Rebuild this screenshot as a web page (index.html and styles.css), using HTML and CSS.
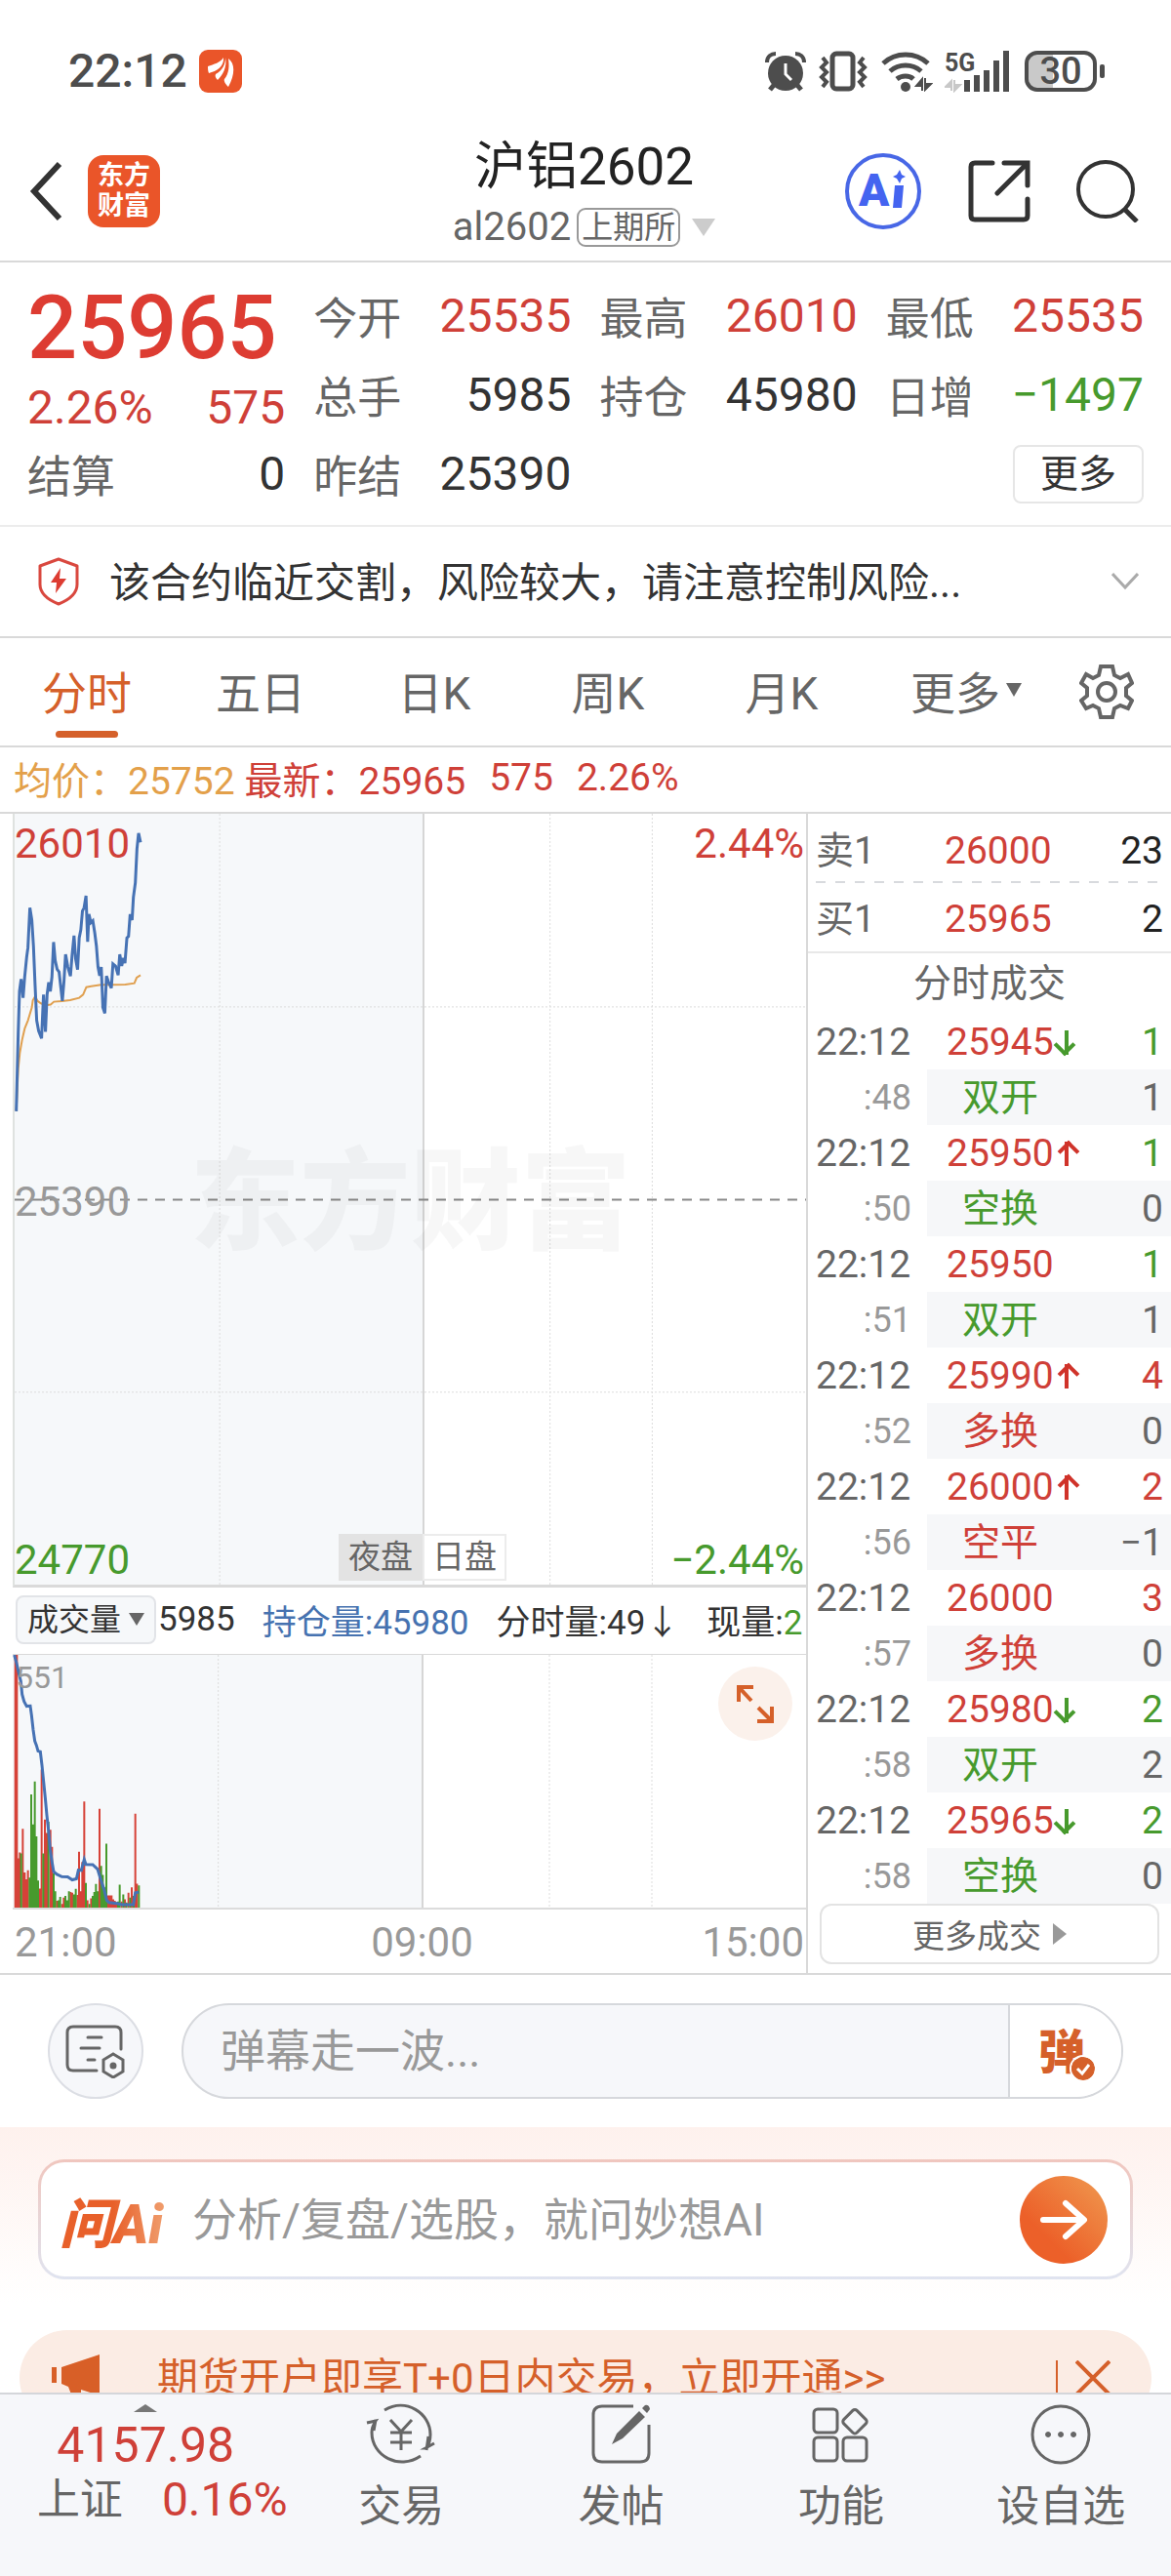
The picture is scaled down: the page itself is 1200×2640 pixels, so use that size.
FILE: index.html
```html
<!doctype html>
<html lang="zh-CN">
  <head>
    <meta charset="UTF-8" />
    <meta name="viewport" content="width=device-width, initial-scale=1.0" />
    <title>沪铝2602</title>
    <link rel="stylesheet" href="styles.css">
  </head>
  <body>
    <div class="status-bar">
      <span class="clock">22:12</span>
      <svg class="status-app" width="44" height="44" viewBox="0 0 44 44">
        <rect width="44" height="44" rx="9" fill="#ea5529" />
        <path d="M9 17C15 15 22 13 25 8C26 17 18 22 10 24C9 22 9 19 9 17ZM27 8C29 18 24 26 19 31C17 29 16 27 17 25C24 21 27 15 27 8ZM30 9C37 14 37 25 30 38C27 35 25 32 26 30C31 24 31 16 30 9Z" fill="#fff" />
      </svg>
      <div class="status-icons">
        <svg width="42" height="42" viewBox="0 0 42 42">
          <path d="M10 34L5 40M32 34L37 40" stroke="#4d4d4d" stroke-width="5" />
          <path d="M2 12C2 6 6 3 11 3M40 12C40 6 36 3 31 3" fill="none" stroke="#4d4d4d" stroke-width="4" />
          <circle cx="21" cy="23" r="18" fill="#4d4d4d" />
          <path d="M21 13V24L27 30" fill="none" stroke="#fff" stroke-width="3" />
        </svg>
        <svg width="52" height="42" viewBox="0 0 52 42">
          <rect x="15" y="3" width="21" height="36" rx="4" fill="none" stroke="#4d4d4d" stroke-width="5" />
          <path d="M5 7L9 12L4 17L9 22L4 27L9 32L5 37M47 7L43 12L48 17L43 22L48 27L43 32L47 37" fill="none" stroke="#4d4d4d" stroke-width="4" />
        </svg>
        <svg width="54" height="42" viewBox="0 0 54 42">
          <path d="M3 13C16 1 36 1 49 13M10 21C19 13 33 13 42 21M17 29C22 25 30 25 34 29" fill="none" stroke="#4d4d4d" stroke-width="5" />
          <circle cx="26" cy="37" r="5" fill="#4d4d4d" />
          <path d="M43 41V29L37 36H43M46 28V40L52 34H46" fill="#4d4d4d" stroke="#4d4d4d" stroke-width="2" />
        </svg>
        <svg width="70" height="44" viewBox="0 0 70 44">
          <text class="net-type" x="0" y="22">5G</text>
          <path d="M7 42V32L1 38H7M10 31V42L16 36H10" fill="#c8c8c8" stroke="#c8c8c8" stroke-width="2" />
          <path d="M23 43V31M33 43V26M43 43V21M53 43V11M63 43V1" stroke="#4d4d4d" stroke-width="6" />
        </svg>
        <svg width="84" height="44" viewBox="0 0 84 44">
          <path d="M14 4H29V40H14Q4 40 4 30V14Q4 4 14 4Z" fill="#c9c9c9" />
          <rect x="2" y="3" width="70" height="38" rx="11" fill="none" stroke="#4d4d4d" stroke-width="4" />
          <rect x="77" y="15" width="5" height="14" rx="2" fill="#4d4d4d" />
          <text class="battery-text" x="37" y="35" text-anchor="middle">30</text>
        </svg>
      </div>
    </div>

    <header class="header">
      <div class="header-left">
        <button class="icon-btn" aria-label="返回">
          <svg width="34" height="62" viewBox="0 0 34 62"><path d="M31 3L5 31L31 59" fill="none" stroke="#333" stroke-width="6" /></svg>
        </button>
        <a class="brand" href="#">东方<br>财富</a>
      </div>
      <div class="header-title">
        <h1>沪铝2602</h1>
        <div class="contract">
          al2602<span class="exchange">上期所</span>
          <svg width="24" height="18" viewBox="0 0 24 18"><path d="M0 0H24L12 18Z" fill="#ccc" /></svg>
        </div>
      </div>
      <div class="header-right">
        <button class="icon-btn" aria-label="Ai">
          <svg width="80" height="80" viewBox="0 0 80 80">
            <circle cx="40" cy="40" r="37" fill="none" stroke="#4867e6" stroke-width="4" />
            <text class="ai-text" x="15" y="55">A</text>
            <path d="M52 34H61L59 57H50ZM57 18L59 23L63 25L59 27L57 32L54 27L50 25L54 23Z" fill="#4464f0" />
          </svg>
        </button>
        <button class="icon-btn" aria-label="分享">
          <svg width="64" height="64" viewBox="0 0 64 64">
            <path d="M25 3H7Q3 3 3 7V57Q3 61 7 61H57Q61 61 61 57V40M37 3H61V26M60 4L30 34" fill="none" stroke="#333" stroke-width="5" stroke-linecap="round" />
          </svg>
        </button>
        <button class="icon-btn" aria-label="搜索">
          <svg width="64" height="64" viewBox="0 0 64 64">
            <circle cx="30" cy="30" r="28" fill="none" stroke="#333" stroke-width="4" />
            <path d="M49 50L62 63" stroke="#333" stroke-width="5" />
          </svg>
        </button>
      </div>
    </header>

    <section class="quote">
      <div class="quote-col">
        <div class="last-price">25965</div>
        <div class="change"><span>2.26%</span><span>575</span></div>
        <div class="quote-row"><span class="label">结算</span><span>0</span></div>
      </div>
      <div class="quote-col">
        <div class="quote-row"><span class="label">今开</span><span class="up">25535</span></div>
        <div class="quote-row"><span class="label">总手</span><span>5985</span></div>
        <div class="quote-row"><span class="label">昨结</span><span>25390</span></div>
      </div>
      <div class="quote-col">
        <div class="quote-row"><span class="label">最高</span><span class="up">26010</span></div>
        <div class="quote-row"><span class="label">持仓</span><span>45980</span></div>
      </div>
      <div class="quote-col">
        <div class="quote-row"><span class="label">最低</span><span class="up">25535</span></div>
        <div class="quote-row"><span class="label">日增</span><span class="down">−1497</span></div>
        <div class="quote-row more-row"><button class="more-btn">更多</button></div>
      </div>
    </section>

    <section class="notice">
      <svg width="44" height="50" viewBox="0 0 44 50">
        <path d="M22 2L41 9V28C41 38 32 44 22 48C12 44 3 38 3 28V9Z" fill="none" stroke="#d9483f" stroke-width="3" stroke-linejoin="round" />
        <path d="M24 11L14 26H20L19 37L30 22H23Z" fill="#dd3c32" />
      </svg>
      <p>该合约临近交割，风险较大，请注意控制风险...</p>
      <svg width="28" height="18" viewBox="0 0 28 18"><path d="M1 1L14 15L27 1" fill="none" stroke="#aaa" stroke-width="3" /></svg>
    </section>

    <nav class="tabs">
      <a class="tab active" href="#">分时</a>
      <a class="tab" href="#">五日</a>
      <a class="tab" href="#">日K</a>
      <a class="tab" href="#">周K</a>
      <a class="tab" href="#">月K</a>
      <a class="tab tab-more" href="#">更多<svg width="16" height="14" viewBox="0 0 16 14"><path d="M0 0H16L8 14Z" fill="#666" /></svg></a>
      <button class="icon-btn tab-gear" aria-label="设置">
        <svg width="56" height="56" viewBox="0 0 56 56" fill="none" stroke="#666" stroke-width="4">
          <path d="M22 2H34L36 11L42 14L50 10L54 19L48 24V32L54 37L50 45L42 42L36 45L34 54H22L20 45L14 42L7 45L2 37L8 32V24L2 19L7 10L14 14L20 11Z" />
          <circle cx="28" cy="28" r="9" />
        </svg>
      </button>
    </nav>

    <div class="legend">
      <span class="avg">均价：25752</span>
      <span class="up">最新：25965</span>
      <span class="up legend-item">575</span>
      <span class="up legend-item">2.26%</span>
    </div>

    <main class="market">
      <div class="charts">
        <div class="price-chart">
          <svg viewBox="39 42 2439 2379" preserveAspectRatio="none">
            <rect x="39" y="42" width="1260" height="2379" fill="#f6f8fa" />
            <path class="grid" d="M671 42V2421M1689 42V2421M2004 42V2421M39 638H2478M39 1827H2478" />
            <path class="session" d="M1299 42V2421" />
            <path class="base" d="M39 1233H2478" />
            <path class="avg-line" d="M44 960L50 830L55 780L62 740L70 705L80 680L92 640L95 618L102 606L110 620L120 627L135 633L150 631L160 622L185 620L210 617L238 610L250 600L260 577L275 574L305 570L340 570L380 569L408 565L415 548L427 540" />
            <path class="price-line" d="M44 960L50 720L54 590L59 552L65 610L70 545L76 485L80 455L86 332L92 370L97 450L102 570L107 680L113 712L122 735L128 600L134 715L139 600L144 562L149 590L154 545L159 438L164 495L170 522L176 530L186 620L191 560L196 476L203 515L211 543L216 480L222 418L227 490L233 523L238 425L243 400L248 342L253 332L259 295L264 437L268 352L274 378L280 372L286 410L291 450L296 515L301 542L306 515L311 640L317 658L322 543L328 560L337 580L342 505L350 512L358 540L363 476L369 512L374 487L379 503L385 425L390 420L395 352L401 370L405 300L411 255L416 150L421 102L427 130" />
          </svg>
          <div class="watermark">东方财富</div>
          <span class="mark top-left up">26010</span>
          <span class="mark top-right up">2.44%</span>
          <span class="mark mid-left">25390</span>
          <span class="mark bottom-left down">24770</span>
          <span class="mark bottom-right down">−2.44%</span>
          <div class="sessions"><span class="night">夜盘</span><span class="day">日盘</span></div>
        </div>

        <div class="volume-bar">
          <span class="select-wrap">
            <select aria-label="指标">
              <option>成交量</option>
            </select>
            <svg width="16" height="13" viewBox="0 0 16 13"><path d="M0 0H16L8 13Z" fill="#666" /></svg>
          </span>
          <span class="volume-total">5985</span>
          <span class="volume-item open-interest">持仓量:45980</span>
          <span class="volume-item">分时量:49↓</span>
          <span class="volume-item">现量:<b class="down">2</b></span>
        </div>

        <div class="volume-chart">
          <svg viewBox="39 468 2439 783" preserveAspectRatio="none">
            <rect x="39" y="468" width="1260" height="783" fill="#f6f8fa" />
            <path class="grid" d="M671 468V1251M1689 468V1251M2004 468V1251" />
            <path class="session" d="M1299 468V1251" />
            <path class="bars red" d="M47 1251V468M52 1251V468M57 1251V1098M61 1251V1080M70 1251V1007M76 1251V1142M81 1251V1163M86 1251V1135M123 1251V1192M128 1251V823M138 1251V978M144 1251V1020M155 1251V1010M160 1251V1063M175 1251V1230M191 1251V1240M196 1251V1220M217 1251V1203M222 1251V1205M238 1251V1212M243 1251V1078M248 1251V1200M253 1251V1110M259 1251V922M269 1251V1228M280 1251V1222M306 1251V945M332 1251V1213M337 1251V1213M343 1251V1213M348 1251V1225M353 1251V1230M358 1251V1235M374 1251V1232M384 1251V1225M395 1251V1205M405 1251V1188M416 1251V960M421 1251V1177" />
            <path class="bars green" d="M65 1251V1083M91 1251V1158M96 1251V900M101 1251V993M107 1251V860M112 1251V1030M117 1251V1167M133 1251V1083M149 1251V985M165 1251V1145M170 1251V1200M180 1251V1228M185 1251V1218M201 1251V1215M206 1251V1228M212 1251V1200M227 1251V1210M233 1251V1193M264 1251V1175M275 1251V1240M285 1251V1215M290 1251V1203M295 1251V1178M300 1251V1200M311 1251V1122M316 1251V1150M322 1251V1188M327 1251V1053M363 1251V1232M368 1251V1180M379 1251V1210M389 1251V1235M400 1251V1220M411 1251V1215M427 1251V1182" />
            <path class="interest-line" d="M44 468L50 490L58 525L64 550L68 590L74 612L82 627L93 626L97 655L102 700L107 735L112 748L117 766L124 768L129 810L134 860L139 910L144 965L149 1010L154 1070L160 1110L165 1140L175 1148L190 1155L208 1156L222 1165L235 1162L241 1135L250 1136L259 1102L264 1117L285 1118L300 1132L310 1165L320 1195L328 1228L335 1235L360 1238L375 1242L410 1242L416 1205L427 1203" />
          </svg>
          <span class="volume-max">551</span>
          <button class="icon-btn expand" aria-label="全屏">
            <svg width="76" height="76" viewBox="0 0 76 76">
              <circle cx="38" cy="38" r="38" fill="#fbf1eb" />
              <path d="M21 36V21H36M21 21L34 35M40 56H55V41M55 56L41 42" fill="none" stroke="#d5602a" stroke-width="4" />
            </svg>
          </button>
        </div>
        <div class="time-axis"><span>21:00</span><span class="axis-mid">09:00</span><span class="axis-end">15:00</span></div>
      </div>

      <aside class="trades">
        <table class="depth">
          <tr><td>卖1</td><td class="up">26000</td><td class="qty">23</td></tr>
          <tr><td>买1</td><td class="up">25965</td><td class="qty">2</td></tr>
        </table>
        <h2>分时成交</h2>
        <table class="ticks">
          <tr><td>22:12</td><td class="up">25945<i class="arrow fall"></i></td><td class="down">1</td></tr>
          <tr class="sub"><td>:48</td><td class="down">双开</td><td>1</td></tr>
          <tr><td>22:12</td><td class="up">25950<i class="arrow"></i></td><td class="down">1</td></tr>
          <tr class="sub"><td>:50</td><td class="down">空换</td><td>0</td></tr>
          <tr><td>22:12</td><td class="up">25950</td><td class="down">1</td></tr>
          <tr class="sub"><td>:51</td><td class="down">双开</td><td>1</td></tr>
          <tr><td>22:12</td><td class="up">25990<i class="arrow"></i></td><td class="up">4</td></tr>
          <tr class="sub"><td>:52</td><td class="up">多换</td><td>0</td></tr>
          <tr><td>22:12</td><td class="up">26000<i class="arrow"></i></td><td class="up">2</td></tr>
          <tr class="sub"><td>:56</td><td class="up">空平</td><td>−1</td></tr>
          <tr><td>22:12</td><td class="up">26000</td><td class="up">3</td></tr>
          <tr class="sub"><td>:57</td><td class="up">多换</td><td>0</td></tr>
          <tr><td>22:12</td><td class="up">25980<i class="arrow fall"></i></td><td class="down">2</td></tr>
          <tr class="sub"><td>:58</td><td class="down">双开</td><td>2</td></tr>
          <tr><td>22:12</td><td class="up">25965<i class="arrow fall"></i></td><td class="down">2</td></tr>
          <tr class="sub"><td>:58</td><td class="down">空换</td><td>0</td></tr>
        </table>
        <button class="more-trades">更多成交<svg width="14" height="22" viewBox="0 0 14 22"><path d="M0 0L14 11L0 22Z" fill="#999" /></svg></button>
      </aside>
    </main>

    <section class="danmu">
      <button class="danmu-set" aria-label="弹幕设置">
        <svg width="62" height="56" viewBox="0 0 62 56" fill="none" stroke="#666" stroke-width="3" stroke-linecap="round">
          <path d="M57 26V9Q57 3 51 3H8Q2 3 2 9V42Q2 48 8 48H32M23 14H37M16 25H35M23 37H30" />
          <path d="M49 31L59 37V49L49 55L39 49V37Z" />
          <circle cx="49" cy="43" r="2" fill="#666" />
        </svg>
      </button>
      <div class="danmu-box">
        <input type="text" aria-label="弹幕" placeholder="弹幕走一波...">
        <button class="danmu-toggle">弹<svg width="24" height="24" viewBox="0 0 24 24"><circle cx="12" cy="12" r="12" fill="#d5602a" /><path d="M6 12L11 17L18 8" fill="none" stroke="#fff" stroke-width="3" /></svg></button>
      </div>
    </section>

    <section class="ask">
      <div class="ask-box">
        <span class="ask-logo">问Ai</span>
        <input type="text" aria-label="问Ai" placeholder="分析/复盘/选股，就问妙想AI">
        <button class="icon-btn" aria-label="发送">
          <svg width="92" height="92" viewBox="0 0 92 92">
            <defs>
              <linearGradient id="send" x1="0.3" y1="0.7" x2="1" y2="0"><stop offset="0" stop-color="#ec6029" /><stop offset="1" stop-color="#f09a50" /></linearGradient>
            </defs>
            <circle cx="46" cy="46" r="45" fill="url(#send)" />
            <path d="M25 46H66M48 29L67 46L48 63" fill="none" stroke="#fff" stroke-width="6" stroke-linecap="round" stroke-linejoin="round" />
          </svg>
        </button>
      </div>
    </section>

    <section class="promo">
      <svg width="50" height="50" viewBox="0 0 50 50" fill="#d85f27"><path d="M0 14H5V30H0ZM10 14L49 1V43L30 37V47H22L17 34L10 31Z" /></svg>
      <a href="#">期货开户即享T+0日内交易，立即开通&gt;&gt;</a>
      <button class="icon-btn promo-close" aria-label="关闭">
        <svg width="36" height="36" viewBox="0 0 36 36"><path d="M1 1L35 35M35 1L1 35" stroke="#d5602a" stroke-width="4" /></svg>
      </button>
    </section>

    <footer class="bottom-bar">
      <a class="index" href="#">
        <svg width="24" height="8" viewBox="0 0 24 8"><path d="M0 8L12 0L24 8Z" fill="#777" /></svg>
        <span class="index-value up">4157.98</span>
        <span class="index-row"><span>上证</span><span class="index-change up">0.16%</span></span>
      </a>
      <a class="nav-item" href="#">
        <svg width="72" height="64" viewBox="0 0 72 64" fill="none" stroke="#666" stroke-width="3">
          <path d="M19 7C41 -6 66 10 66 32Q66 40 62 46L61 46L70 41M62 48L64 34M56 54C34 69 6 54 6 30Q6 24 10 18L1 20M10 17L8 28" />
          <path d="M25 17L36 29L47 17M25 30H47M25 40H47M36 29V48" />
        </svg>
        交易
      </a>
      <a class="nav-item" href="#">
        <svg width="64" height="64" viewBox="0 0 64 64">
          <path d="M44 3H12Q3 3 3 12V51Q3 60 12 60H51Q60 60 60 51V22" fill="none" stroke="#666" stroke-width="3" />
          <path d="M22 42L27 31L50 8L56 14L33 36ZM53 5L56 2Q60 1 61 6L58 10Z" fill="#666" />
        </svg>
        发帖
      </a>
      <a class="nav-item" href="#">
        <svg width="64" height="64" viewBox="0 0 64 64" fill="none" stroke="#666" stroke-width="3">
          <rect x="4" y="6" width="24" height="24" rx="4" />
          <rect x="4" y="35" width="24" height="24" rx="4" />
          <rect x="34" y="35" width="24" height="24" rx="4" />
          <rect x="37" y="9" width="19" height="19" rx="3" transform="rotate(45 46 18)" />
        </svg>
        功能
      </a>
      <a class="nav-item" href="#">
        <svg width="64" height="64" viewBox="0 0 64 64">
          <circle cx="32" cy="32" r="29" fill="none" stroke="#666" stroke-width="3" />
          <path d="M19 29a3 3 0 1 0 .1 0ZM32 29a3 3 0 1 0 .1 0ZM45 29a3 3 0 1 0 .1 0Z" fill="#666" />
        </svg>
        设自选
      </a>
    </footer>
  </body>
</html>
```
FILE: styles.css
```css
* {
  margin: 0;
  padding: 0;
  box-sizing: border-box;
}
body {
  background: #fff;
  color: #333;
  font-family: Roboto, "Noto Sans CJK SC", sans-serif;
  font-size: 39px;
}
a {
  color: inherit;
  text-decoration: none;
}
button,
input,
select {
  font: inherit;
  color: inherit;
}
svg {
  display: block;
  flex: none;
}
.icon-btn {
  background: none;
  border: none;
}
.up {
  color: #cf4038;
}
.down {
  color: #479a2d;
}

/* status bar */
.status-bar {
  display: flex;
  align-items: center;
  height: 110px;
  padding: 36px 66px 0 70px;
}
.clock {
  font-size: 48px;
  font-weight: 500;
  line-height: 74px;
  color: #4d4d4d;
}
.status-app {
  margin-left: 12px;
}
.status-icons {
  display: flex;
  align-items: center;
  gap: 12px;
  margin-left: auto;
}
.net-type {
  font-size: 25px;
  font-weight: 700;
  fill: #4d4d4d;
}
.battery-text {
  font-size: 38px;
  font-weight: 500;
  fill: #4d4d4d;
}

/* header */
.header {
  display: grid;
  grid-template-columns: 1fr auto 1fr;
  align-items: center;
  height: 159px;
  padding: 14px 33px 0 30px;
  border-bottom: 2px solid #d9d9d9;
}
.header-left,
.header-right {
  display: flex;
  align-items: center;
}
.header-left {
  gap: 26px;
}
.header-right {
  justify-content: flex-end;
  gap: 47px;
}
.brand {
  width: 74px;
  height: 74px;
  padding-top: 6px;
  background: #ea5529;
  border-radius: 16px;
  color: #fff;
  font-size: 27px;
  font-weight: 700;
  line-height: 31px;
  text-align: center;
}
.header-title {
  padding-top: 4px;
  text-align: center;
}
.header-title h1 {
  font-size: 53px;
  font-weight: 400;
  line-height: 70px;
  color: #222;
}
.contract {
  display: flex;
  align-items: center;
  justify-content: center;
  font-size: 40px;
  line-height: 54px;
  color: #666;
}
.exchange {
  margin: 0 12px 0 6px;
  padding: 0 3px;
  border: 2px solid #999;
  border-radius: 9px;
  font-size: 32px;
  line-height: 36px;
}
.ai-text {
  font-size: 46px;
  font-weight: 900;
  fill: #4464f0;
}

/* quote */
.quote {
  display: grid;
  grid-template-columns: repeat(4, 1fr);
  gap: 29px;
  height: 271px;
  padding: 14px 28px 0;
  border-bottom: 2px solid #ececec;
  font-size: 48px;
}
.last-price {
  padding-top: 6px;
  color: #dd3c32;
  font-size: 90px;
  font-weight: 500;
  line-height: 96px;
}
.change,
.quote-row {
  display: flex;
  justify-content: space-between;
  align-items: center;
}
.change {
  height: 60px;
  padding-top: 4px;
  color: #cf4038;
}
.quote-row {
  height: 81px;
}
.label {
  font-size: 45px;
  color: #666;
}
.more-row {
  justify-content: flex-end;
}
.more-btn {
  width: 134px;
  height: 60px;
  background: #fff;
  border: 2px solid #e6e6e6;
  border-radius: 8px;
  font-size: 39px;
  line-height: 50px;
}

/* notice */
.notice {
  display: flex;
  align-items: center;
  height: 114px;
  padding: 0 33px 0 38px;
  border-bottom: 2px solid #d9d9d9;
  font-size: 42px;
}
.notice p {
  flex: 1;
  margin-left: 30px;
  padding-bottom: 6px;
}

/* period tabs */
.tabs {
  display: grid;
  grid-template-columns: repeat(6, 178fr) 132fr;
  height: 112px;
  border-bottom: 2px solid #d9d9d9;
  font-size: 46px;
  color: #666;
}
.tab {
  display: flex;
  align-items: center;
  justify-content: center;
  position: relative;
  padding-bottom: 5px;
}
.tab-more {
  gap: 6px;
  padding-left: 22px;
}
.tab.active {
  color: #d5602a;
}
.tab.active::after {
  content: "";
  position: absolute;
  bottom: 8px;
  width: 64px;
  height: 7px;
  background: #d5602a;
  border-radius: 4px;
}
.tab-gear {
  display: flex;
  align-items: center;
  justify-content: center;
}

/* legend */
.legend {
  display: flex;
  align-items: center;
  height: 68px;
  padding: 0 0 4px 14px;
  border-bottom: 2px solid #d9d9d9;
}
.avg {
  margin-right: 10px;
  color: #e3a04a;
}
.legend-item {
  margin-left: 24px;
}

/* charts */
.market {
  display: flex;
  border-bottom: 2px solid #d9d9d9;
}
.charts {
  flex: 1;
  padding-left: 13px;
}
.price-chart {
  position: relative;
  height: 793px;
  border-left: 2px solid #dfe2e0;
  border-bottom: 3px solid #dadada;
}
.price-chart > svg,
.volume-chart > svg {
  width: 100%;
  height: 100%;
}
.price-chart path,
.volume-chart path {
  fill: none;
  vector-effect: non-scaling-stroke;
}
.price-chart .grid,
.volume-chart .grid {
  stroke: #dcdcdc;
  stroke-dasharray: 2 2;
}
.session {
  stroke: #d6d6d6;
  stroke-width: 2px;
}
.base {
  stroke: #888;
  stroke-width: 2px;
  stroke-dasharray: 10 8;
}
.avg-line {
  stroke: #e0a050;
  stroke-width: 2px;
}
.price-line {
  stroke: #4672b4;
  stroke-width: 3px;
}
.watermark {
  position: absolute;
  top: 334px;
  left: 0;
  right: 0;
  color: rgba(0, 0, 0, 0.03);
  font-size: 113px;
  font-weight: 900;
  line-height: 130px;
  text-align: center;
}
.mark {
  position: absolute;
  font-size: 42px;
  line-height: 50px;
}
.top-left,
.mid-left,
.bottom-left {
  left: 0;
}
.top-right,
.bottom-right {
  right: 2px;
}
.top-left,
.top-right {
  top: 6px;
}
.mid-left {
  top: 373px;
  color: #999;
}
.bottom-left,
.bottom-right {
  bottom: 0;
}
.sessions {
  display: flex;
  position: absolute;
  right: 307px;
  bottom: 4px;
  color: #666;
  font-size: 33px;
  line-height: 44px;
}
.sessions span {
  width: 86px;
  border: 2px solid #ececec;
  text-align: center;
}
.sessions .night {
  background: #e3e3e3;
  border-color: #e3e3e3;
}
.sessions .day {
  background: #fff;
}
.volume-bar {
  display: flex;
  align-items: center;
  height: 69px;
  padding: 0 0 3px 3px;
  border-bottom: 1px solid #d9d9d9;
  font-size: 35px;
  white-space: nowrap;
}
.select-wrap {
  display: flex;
  align-items: center;
  width: 144px;
  height: 50px;
  padding: 0 10px;
  background: #f6f8fa;
  border: 2px solid #e2e4e8;
  border-radius: 8px;
  font-size: 32px;
}
.select-wrap select {
  width: 106px;
  background: none;
  border: none;
  appearance: none;
}
.volume-total {
  margin-left: 2px;
}
.volume-item {
  margin-left: 28px;
}
.volume-item b {
  font-weight: 400;
}
.open-interest {
  color: #4672b0;
}
.volume-chart {
  position: relative;
  height: 261px;
  border-bottom: 2px solid #dcdcdc;
}
.bars {
  stroke-width: 2px;
}
.bars.red {
  stroke: #d64238;
}
.bars.green {
  stroke: #479a2d;
}
.interest-line {
  stroke: #4672b4;
  stroke-width: 3px;
}
.volume-max {
  position: absolute;
  top: 4px;
  left: 3px;
  color: #999;
  font-size: 32px;
  line-height: 38px;
}
.expand {
  position: absolute;
  top: 12px;
  right: 14px;
}
.time-axis {
  display: grid;
  grid-template-columns: 1fr auto 1fr;
  height: 65px;
  padding: 0 2px;
  color: #999;
  font-size: 42px;
  line-height: 68px;
}
.axis-mid {
  padding-left: 26px;
}
.axis-end {
  text-align: right;
}

/* order book and ticks */
.trades {
  width: 374px;
  border-left: 2px solid #d9d9d9;
}
.trades table {
  width: 100%;
  border-collapse: collapse;
  table-layout: fixed;
}
.trades td {
  color: #666;
  line-height: 50px;
}
.trades td.up {
  color: #cf4038;
}
.trades td.down {
  color: #479a2d;
}
.trades td:first-child {
  width: 122px;
  padding-left: 8px;
}
.trades td:last-child {
  width: 80px;
  padding-right: 8px;
  text-align: right;
}
.depth {
  border-bottom: 2px solid #e8e8e8;
}
.depth tr {
  height: 71px;
}
.depth tr:first-child {
  background: repeating-linear-gradient(90deg, #d8dade 0 10px, #fff 10px 20px) 8px 100% / 350px 2px no-repeat;
}
.depth td {
  padding-top: 4px;
}
.depth td:nth-child(2) {
  padding-left: 18px;
}
.trades .qty {
  color: #222;
}
.trades h2 {
  color: #666;
  font-size: 39px;
  font-weight: 400;
  line-height: 62px;
  text-align: center;
}
.ticks tr {
  height: 57px;
}
.ticks td:nth-child(2) {
  padding-left: 20px;
  white-space: nowrap;
}
.ticks .sub td:first-child {
  padding-right: 16px;
  color: #999;
  font-size: 36px;
  text-align: right;
}
.ticks .sub td:nth-child(2) {
  padding-left: 36px;
}
.ticks .sub td:not(:first-child) {
  background: #f6f7f9;
}
.arrow {
  display: inline-block;
  position: relative;
  width: 18px;
  height: 25px;
  margin-left: 4px;
  background: linear-gradient(#d0332a, #d0332a) 50% 0 / 4px 100% no-repeat;
}
.arrow::before {
  content: "";
  position: absolute;
  top: 2px;
  left: 3px;
  width: 12px;
  height: 12px;
  border: solid #d0332a;
  border-width: 4px 0 0 4px;
  transform: rotate(45deg);
}
.arrow.fall {
  background-image: linear-gradient(#479a2d, #479a2d);
  transform: rotate(180deg);
}
.arrow.fall::before {
  border-color: #479a2d;
}
.more-trades {
  display: flex;
  align-items: center;
  justify-content: center;
  gap: 12px;
  width: 348px;
  height: 62px;
  margin: 0 auto;
  background: #fff;
  border: 2px solid #e3e3e3;
  border-radius: 12px;
  color: #666;
  font-size: 33px;
}

/* danmu */
.danmu {
  display: flex;
  gap: 39px;
  padding: 29px 49px;
}
.danmu-set {
  display: flex;
  align-items: center;
  justify-content: center;
  width: 98px;
  height: 98px;
  background: #f6f7fa;
  border: 2px solid #dcdee4;
  border-radius: 50%;
}
.danmu-box {
  display: flex;
  flex: 1;
  height: 98px;
  background: #f6f7fa;
  border: 2px solid #d6d8dc;
  border-radius: 49px;
  overflow: hidden;
}
.danmu-box input {
  flex: 1;
  padding-left: 38px;
  background: none;
  border: none;
  font-size: 46px;
}
input::placeholder {
  color: #999;
}
.danmu-toggle {
  position: relative;
  width: 116px;
  padding: 0 8px 6px 0;
  background: #fff;
  border: none;
  border-left: 2px solid #d6d8dc;
  color: #d5602a;
  font-size: 48px;
  font-weight: 900;
}
.danmu-toggle svg {
  position: absolute;
  top: 53px;
  left: 63px;
  border-radius: 50%;
  box-shadow: 0 0 0 2px #fff;
}

/* ask ai */
.ask {
  height: 208px;
  padding: 33px 39px 0;
  background: linear-gradient(#fef1ed, #fff 180px);
}
.ask-box {
  display: flex;
  align-items: center;
  height: 123px;
  padding: 0 22px 0 19px;
  border: 3px solid transparent;
  border-radius: 27px;
  background: linear-gradient(#fff, #fff) padding-box, linear-gradient(#f0c6be, #e0e4f0) border-box;
}
.ask-logo {
  padding-right: 4px;
  background: linear-gradient(90deg, #e8602a 50%, #f0a070) text;
  color: transparent;
  font-size: 55px;
  font-style: italic;
  font-weight: 900;
}
.ask-box input {
  flex: 1;
  min-width: 0;
  margin-left: 26px;
  background: none;
  border: none;
  font-size: 46px;
}

/* promo */
.promo {
  display: flex;
  align-items: center;
  height: 98px;
  margin: 0 20px;
  padding: 0 42px 0 33px;
  background: #fbece4;
  border-radius: 49px;
  color: #d5602a;
  font-size: 42px;
}
.promo a {
  flex: 1;
  margin-left: 58px;
  padding-bottom: 8px;
}
.promo-close {
  padding-left: 18px;
  border-left: 2px solid #d5602a;
}

/* bottom bar */
.bottom-bar {
  display: flex;
  position: fixed;
  left: 0;
  right: 0;
  bottom: 0;
  height: 188px;
  background: #f6f7fa;
  border-top: 2px solid #d4d6da;
  color: #666;
  font-size: 44px;
}
.index {
  display: flex;
  flex: 298 0 0;
  flex-direction: column;
  align-items: center;
  padding-top: 10px;
}
.index-value {
  font-size: 50px;
  line-height: 68px;
}
.index-row {
  display: flex;
  gap: 40px;
  padding-left: 34px;
  line-height: 44px;
}
.index-change {
  font-size: 48px;
}
.nav-item {
  display: flex;
  flex: 225 0 0;
  flex-direction: column;
  align-items: center;
  gap: 12px;
  padding-top: 9px;
  line-height: 60px;
}
```
